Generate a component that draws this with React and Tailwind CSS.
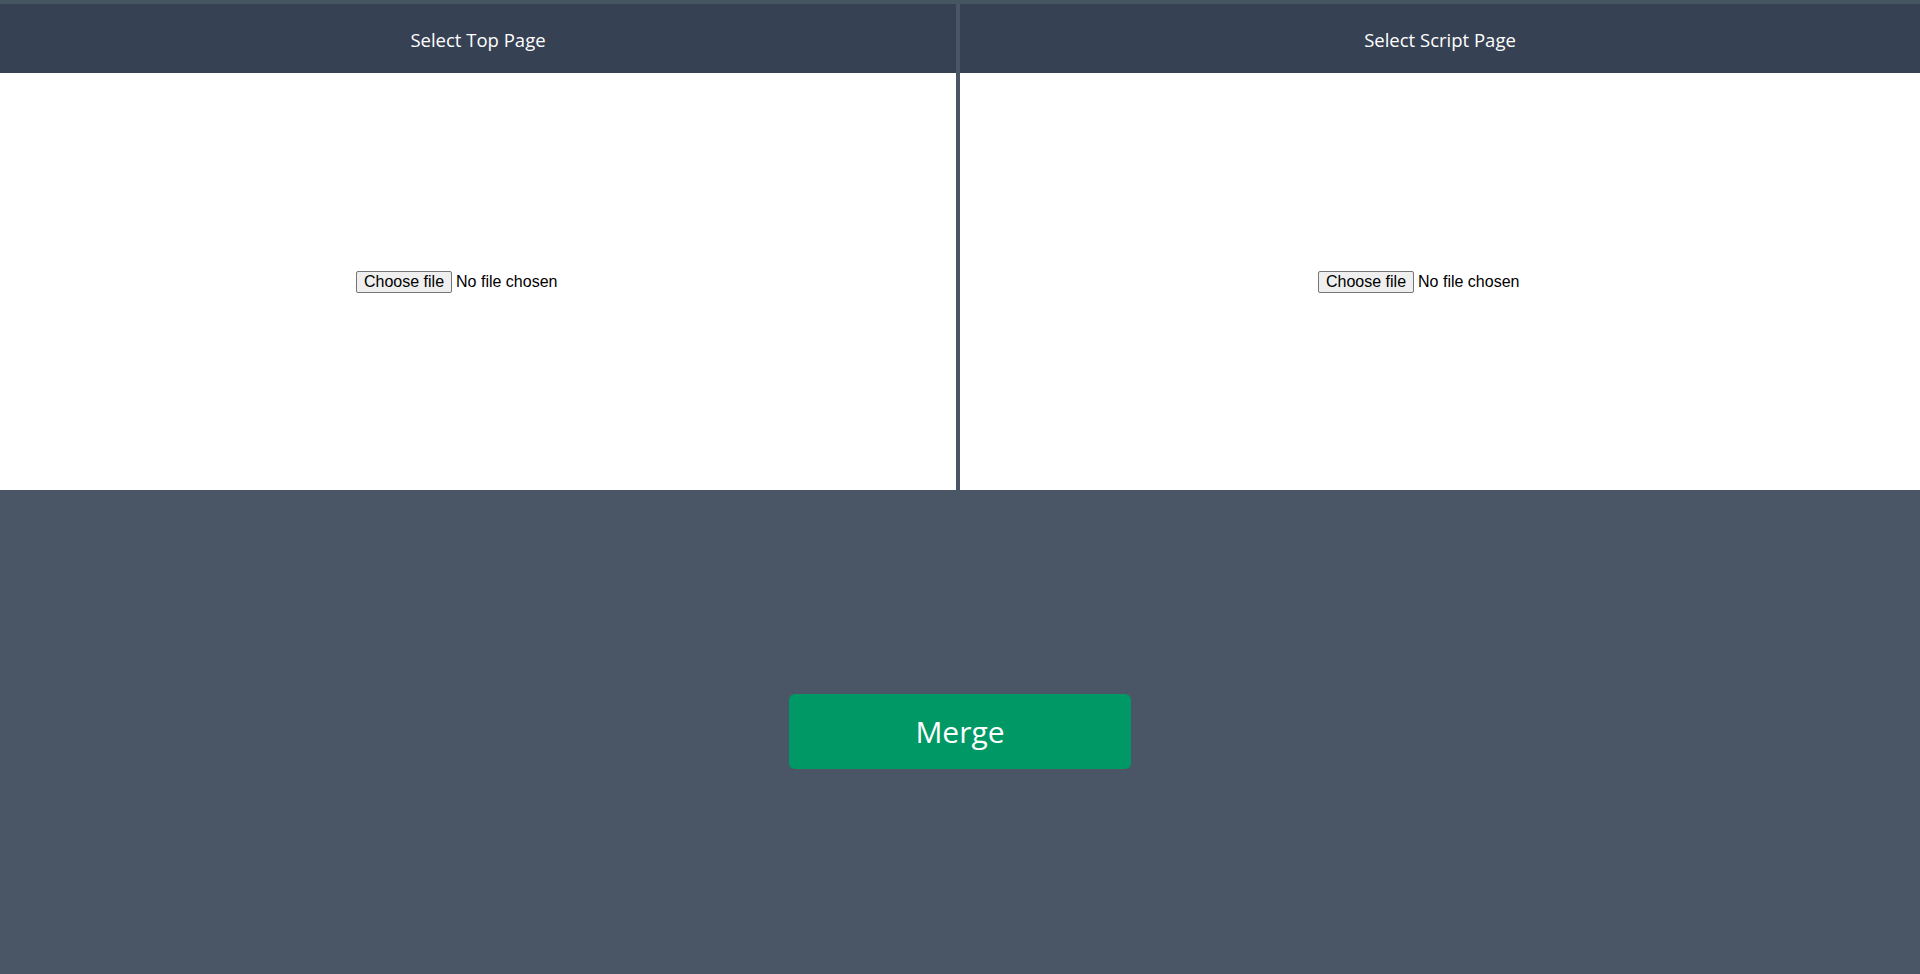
import React, { useState } from "react"

const Panel = ({ title, className }) => {
  const [file, setFile] = useState(null)
  return (
    <div className={`flex flex-col w-1/2 bg-white ${className || ""}`}>
      <div className="flex items-center justify-center h-[69px] pt-[3px] bg-gray-700 text-white text-[18.5px]">
        {title}
      </div>
      <div className="flex flex-1 items-center justify-center">
        <label className="flex items-center w-[244px] cursor-pointer text-[16px] text-black font-['Liberation_Sans',Arial,sans-serif]">
          <span className="px-[7px] py-[1px] leading-[18px] border border-[#767676] rounded-[2px] bg-[#efefef] hover:bg-[#e5e5e5]">
            Choose file
          </span>
          <span className="ml-1 truncate">{file ? file.name : "No file chosen"}</span>
          <input
            type="file"
            className="hidden"
            onChange={(e) => setFile(e.target.files[0] || null)}
          />
        </label>
      </div>
    </div>
  )
}

const App = () => {
  return (
    <div className="flex flex-col min-h-screen bg-gray-600 font-['Open_Sans','Noto_Sans',sans-serif]">
      <div className="h-[4px] bg-[#465660]" />
      <div className="flex h-[486px]">
        <Panel title="Select Top Page" className="border-r-4 border-gray-600" />
        <Panel title="Select Script Page" />
      </div>
      <div className="flex flex-1 items-center justify-center pb-[2px]">
        <button className="w-[342px] h-[75px] rounded-md bg-emerald-600 text-white text-[30px] hover:bg-emerald-700">
          Merge
        </button>
      </div>
    </div>
  )
}

export default App
